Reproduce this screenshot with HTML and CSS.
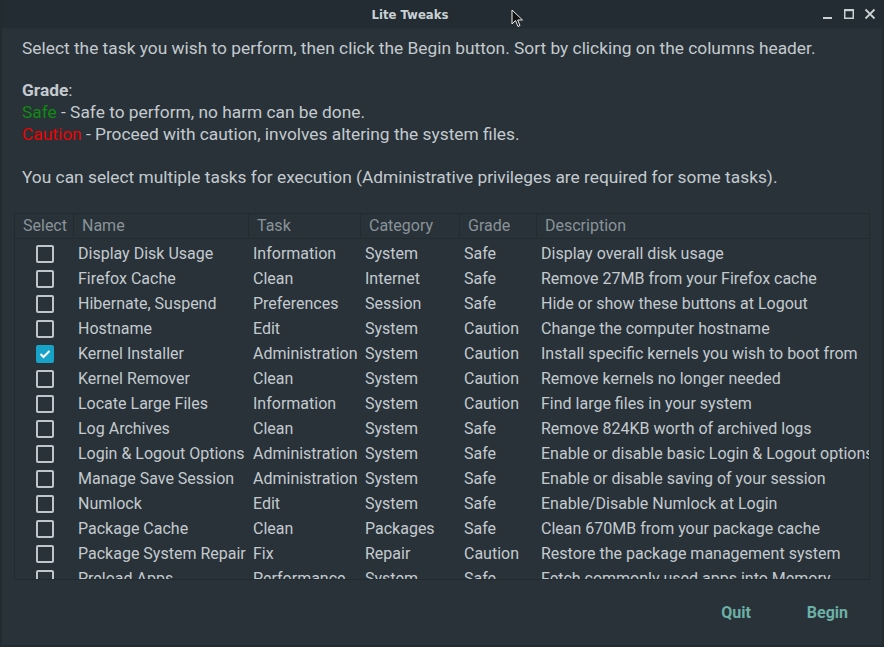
FILE: index.html
```html
<!DOCTYPE html>
<html>
<head>
<meta charset="utf-8">
<link rel="stylesheet" href="styles.css">
</head>
<body>
<div class="window">
  <div class="titlebar">
    <div class="title">Lite Tweaks</div>
    <div class="controls">
      <svg class="ctl" width="12" height="12" viewBox="0 0 12 12"><rect x="1" y="9" width="9" height="2" fill="#c9d1d5"/></svg>
      <svg class="ctl" width="12" height="12" viewBox="0 0 12 12"><rect x="1.75" y="1.75" width="8.5" height="8.5" fill="none" stroke="#c9d1d5" stroke-width="1.5"/><rect x="1" y="1" width="10" height="2.2" fill="#c9d1d5"/></svg>
      <svg class="ctl" width="12" height="12" viewBox="0 0 12 12"><path d="M1.5 1.5 L10.5 10.5 M10.5 1.5 L1.5 10.5" stroke="#c9d1d5" stroke-width="1.8"/></svg>
    </div>
    <svg class="cursor" width="14" height="20" viewBox="0 0 14 20"><path d="M1 1 L1 15 L4.5 11.5 L7 17.5 L9 16.5 L6.7 11 L11.5 11 Z" fill="#111" stroke="#eee" stroke-width="1"/></svg>
  </div>
  <div class="content">
    <div class="intro">
      <p>Select the task you wish to perform, then click the Begin button. Sort by clicking on the columns header.</p>
      <p class="gap"><b>Grade</b>:</p>
      <p><span class="safe">Safe</span> - Safe to perform, no harm can be done.</p>
      <p><span class="caution">Caution</span> - Proceed with caution, involves altering the system files.</p>
      <p class="gap last">You can select multiple tasks for execution (Administrative privileges are required for some tasks).</p>
    </div>
    <div class="table">
      <div class="row head">
        <div class="h">Select</div>
        <div class="h">Name</div>
        <div class="h">Task</div>
        <div class="h">Category</div>
        <div class="h">Grade</div>
        <div class="h last">Description</div>
      </div>
      <div class="body">
        <div class="row"><div class="c sel"><span class="cb"></span></div><div class="c">Display Disk Usage</div><div class="c">Information</div><div class="c">System</div><div class="c">Safe</div><div class="c">Display overall disk usage</div></div>
        <div class="row"><div class="c sel"><span class="cb"></span></div><div class="c">Firefox Cache</div><div class="c">Clean</div><div class="c">Internet</div><div class="c">Safe</div><div class="c">Remove 27MB from your Firefox cache</div></div>
        <div class="row"><div class="c sel"><span class="cb"></span></div><div class="c">Hibernate, Suspend</div><div class="c">Preferences</div><div class="c">Session</div><div class="c">Safe</div><div class="c">Hide or show these buttons at Logout</div></div>
        <div class="row"><div class="c sel"><span class="cb"></span></div><div class="c">Hostname</div><div class="c">Edit</div><div class="c">System</div><div class="c">Caution</div><div class="c">Change the computer hostname</div></div>
        <div class="row"><div class="c sel"><span class="cb on"><svg width="12" height="10" viewBox="0 0 12 10"><path d="M1.5 5 L4.5 8 L10.5 2" fill="none" stroke="#fff" stroke-width="2"/></svg></span></div><div class="c">Kernel Installer</div><div class="c">Administration</div><div class="c">System</div><div class="c">Caution</div><div class="c">Install specific kernels you wish to boot from</div></div>
        <div class="row"><div class="c sel"><span class="cb"></span></div><div class="c">Kernel Remover</div><div class="c">Clean</div><div class="c">System</div><div class="c">Caution</div><div class="c">Remove kernels no longer needed</div></div>
        <div class="row"><div class="c sel"><span class="cb"></span></div><div class="c">Locate Large Files</div><div class="c">Information</div><div class="c">System</div><div class="c">Caution</div><div class="c">Find large files in your system</div></div>
        <div class="row"><div class="c sel"><span class="cb"></span></div><div class="c">Log Archives</div><div class="c">Clean</div><div class="c">System</div><div class="c">Safe</div><div class="c">Remove 824KB worth of archived logs</div></div>
        <div class="row"><div class="c sel"><span class="cb"></span></div><div class="c">Login &amp; Logout Options</div><div class="c">Administration</div><div class="c">System</div><div class="c">Safe</div><div class="c">Enable or disable basic Login &amp; Logout options</div></div>
        <div class="row"><div class="c sel"><span class="cb"></span></div><div class="c">Manage Save Session</div><div class="c">Administration</div><div class="c">System</div><div class="c">Safe</div><div class="c">Enable or disable saving of your session</div></div>
        <div class="row"><div class="c sel"><span class="cb"></span></div><div class="c">Numlock</div><div class="c">Edit</div><div class="c">System</div><div class="c">Safe</div><div class="c">Enable/Disable Numlock at Login</div></div>
        <div class="row"><div class="c sel"><span class="cb"></span></div><div class="c">Package Cache</div><div class="c">Clean</div><div class="c">Packages</div><div class="c">Safe</div><div class="c">Clean 670MB from your package cache</div></div>
        <div class="row"><div class="c sel"><span class="cb"></span></div><div class="c">Package System Repair</div><div class="c">Fix</div><div class="c">Repair</div><div class="c">Caution</div><div class="c">Restore the package management system</div></div>
        <div class="row"><div class="c sel"><span class="cb"></span></div><div class="c">Preload Apps</div><div class="c">Performance</div><div class="c">System</div><div class="c">Safe</div><div class="c">Fetch commonly used apps into Memory</div></div>
      </div>
    </div>
    <div class="buttons">
      <button class="btn quit">Quit</button>
      <button class="btn begin">Begin</button>
    </div>
  </div>
</div>
</body>
</html>
```
FILE: styles.css
```css
html, body {
  margin: 0;
  padding: 0;
  background: #283238;
}
body {
  width: 884px;
  height: 647px;
  overflow: hidden;
  font-family: Roboto, "Noto Sans", sans-serif;
}
.window {
  width: 884px;
  height: 647px;
  box-sizing: border-box;
  display: flex;
  flex-direction: column;
  background: #283238;
  border-left: 2px solid #222b30;
  border-right: 2px solid #222b30;
  border-bottom: 2px solid #222b30;
}
.titlebar {
  position: relative;
  height: 28px;
  flex: none;
  background: #232c32;
  border-bottom: 1px solid #262f35;
  display: flex;
  align-items: center;
}
.title {
  flex: 1;
  text-align: center;
  padding-right: 64px;
  font-family: "DejaVu Sans Condensed", "DejaVu Sans", sans-serif;
  font-weight: bold;
  font-size: 13px;
  color: #c9d1d5;
}
.controls {
  position: absolute;
  right: 6px;
  top: 8px;
  display: flex;
  gap: 9px;
}
.ctl { display: block; }
.cursor {
  position: absolute;
  left: 509px;
  top: 9px;
}
.content {
  flex: 1;
  display: flex;
  flex-direction: column;
  padding: 0 12px 0 12px;
}
.intro {
  padding: 8px 0 0 8px;
  font-size: 17.33px;
  line-height: 22px;
  color: #c4cacf;
}
.intro p { margin: 0; }
.intro p.gap { margin-top: 20px; }
.intro p.gap.last { margin-top: 21px; }
.intro b { font-weight: bold; }
.safe { color: #118a11; }
.caution { color: #ee0000; }
.table {
  margin-top: 25px;
  height: 365px;
  border: 1px solid #222b30;
  overflow: hidden;
  background: #283238;
  flex: none;
}
.row {
  display: grid;
  grid-template-columns: 59px 175px 112px 99px 77px 420px;
  height: 25px;
  align-items: center;
  white-space: nowrap;
}
.row.head {
  height: 24px;
  border-bottom: 1px solid #222b30;
}
.h {
  height: 24px;
  line-height: 24px;
  padding-left: 8px;
  font-size: 16px;
  color: #8a9399;
  border-right: 1px solid #222b30;
  overflow: hidden;
}
.h.last { border-right: none; }
.body { padding-top: 2px; }
.c {
  padding-left: 4px;
  font-size: 16px;
  color: #c4cacf;
  overflow: hidden;
}
.c:last-child { overflow: visible; }
.c.sel {
  display: flex;
  justify-content: center;
  padding-left: 0;
}
.cb {
  width: 14px;
  height: 14px;
  border: 2px solid #bfc6cb;
  border-radius: 2px;
  display: flex;
  align-items: center;
  justify-content: center;
  margin-left: 1px;
}
.cb.on {
  background: #16a3c7;
  border-color: #16a3c7;
}
.buttons {
  flex: 1;
  display: flex;
  justify-content: flex-end;
  align-items: center;
  gap: 0;
  padding-right: 4px;
}
.btn {
  background: none;
  border: none;
  font-family: Roboto, sans-serif;
  font-weight: bold;
  font-size: 16px;
  color: #6cb0a6;
  padding: 8px 18px;
  margin-left: 20px;
}
```
